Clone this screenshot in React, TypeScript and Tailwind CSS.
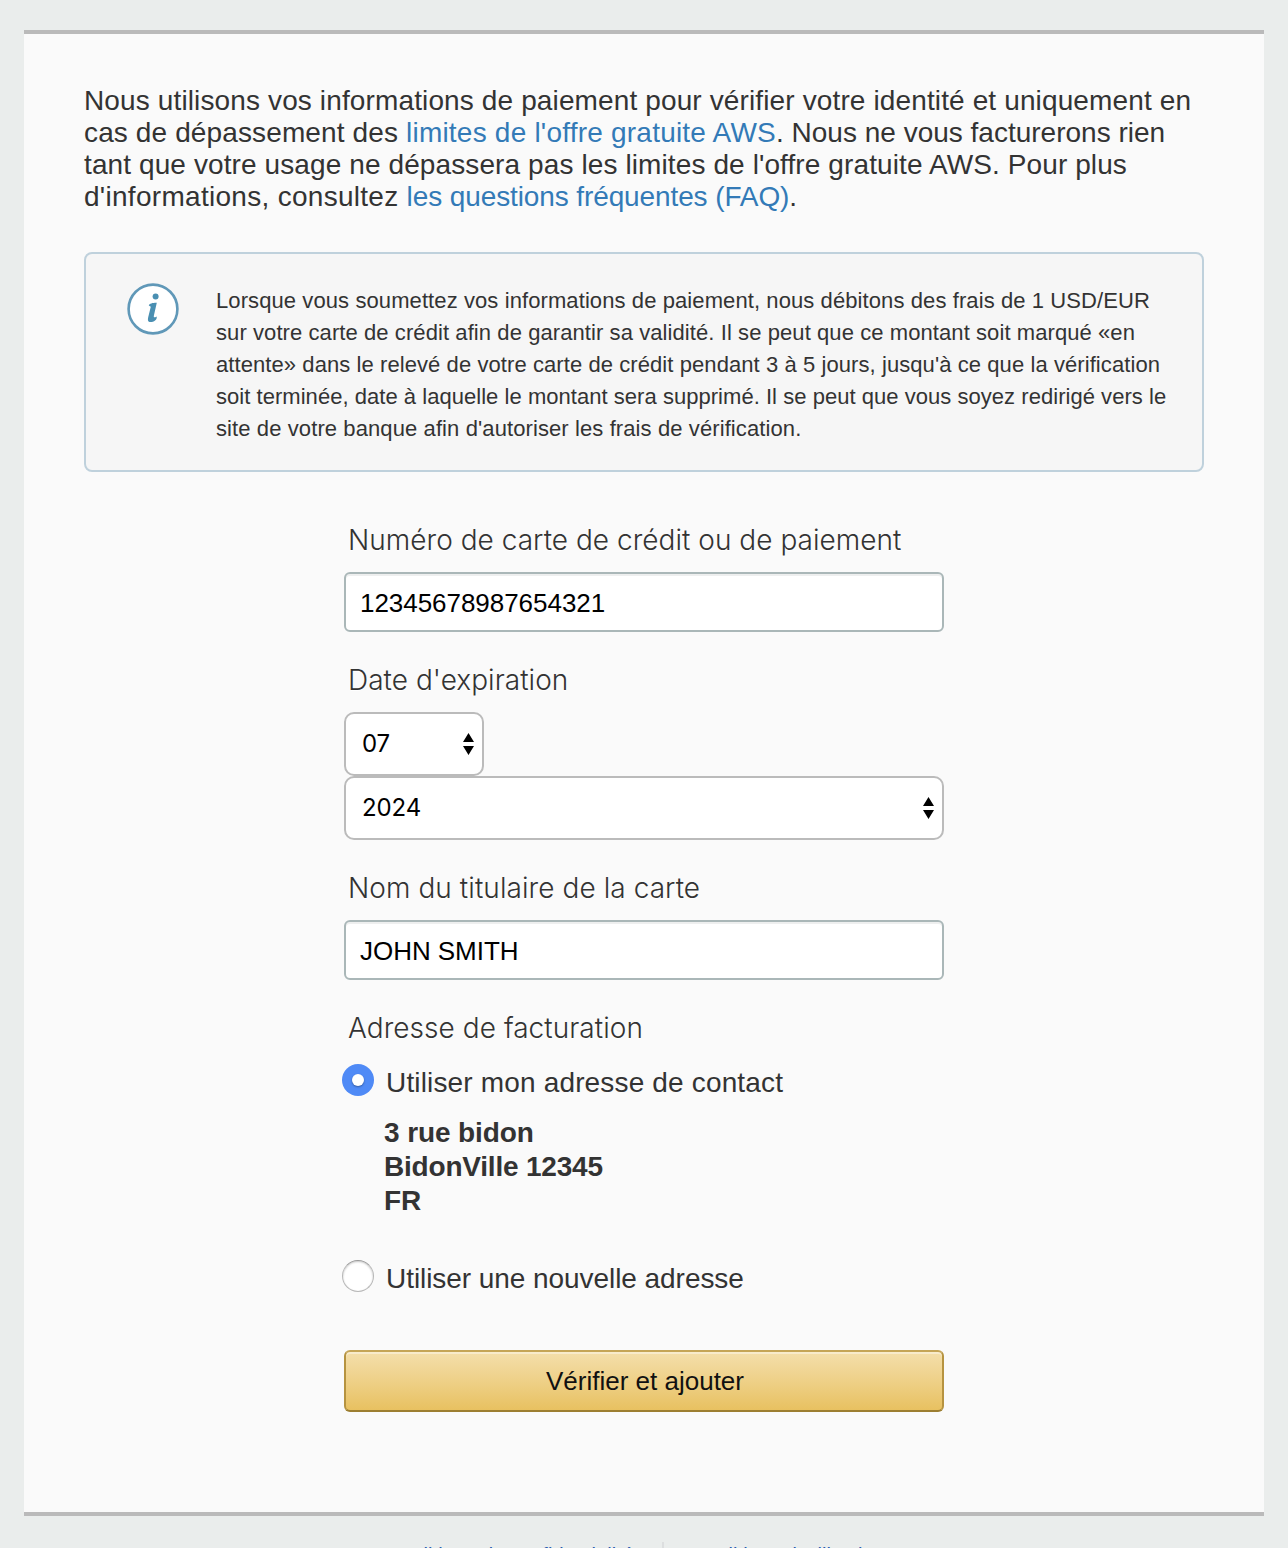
import type { ReactNode } from "react";

function Label({ children, className = "" }: { children: ReactNode; className?: string }) {
  return (
    <div className={`h-8 whitespace-nowrap pl-1 font-['Inter',sans-serif] text-[28px] font-light leading-8 text-[#333] [text-shadow:0_1px_0_#fff] ${className}`}>
      {children}
    </div>
  );
}

function TextField({ value }: { value: string }) {
  return (
    <input
      readOnly
      value={value}
      className="mt-4 block h-[60px] w-full rounded-[6px] border-2 border-[#aab7b8] bg-white px-3.5 pt-0.5 text-[26px] tracking-[-0.04px] text-black shadow-[inset_0_2px_0_#eeefef] outline-none"
    />
  );
}

function Select({ value, className }: { value: string; className: string }) {
  return (
    <div className={`flex h-16 items-center justify-between rounded-[10px] border-2 border-[#bbb] bg-white pl-4 pr-2 ${className}`}>
      <span className="font-['Inter',sans-serif] text-[24px] leading-8 tracking-[-0.1px] text-black">{value}</span>
      <svg width="11" height="22" viewBox="0 0 11 22">
        <path d="M5.5 0 11 9H0zM5.5 22 0 13h11z" fill="#000" />
      </svg>
    </div>
  );
}

function Radio({ checked }: { checked?: boolean }) {
  return checked ? (
    <span className="flex size-8 items-center justify-center rounded-full bg-[#4f8af6]">
      <span className="size-3 rounded-full bg-white shadow-[0_1px_2px_rgba(0,0,0,0.35)]" />
    </span>
  ) : (
    <span className="size-8 rounded-full border border-[#b8b8b8] border-t-[#999] bg-white shadow-[inset_0_1px_2px_rgba(0,0,0,0.22)]" />
  );
}

export default function App() {
  return (
    <div className="h-[1548px] w-[1288px] overflow-hidden bg-[#eaedec] px-6 pt-[30px] font-['Liberation_Sans',Arial,sans-serif] text-[#333]">
      <main className="h-[1486px] border-y-4 border-[#bababa] bg-[#fafafa] px-[60px] pt-[51px]">
        <p className="whitespace-nowrap text-[28px] leading-8">
          <span className="tracking-[0.128px]">Nous utilisons vos informations de paiement pour vérifier votre identité et uniquement en</span>
          <br />
          <span className="tracking-[0.126px]">cas de dépassement des </span>
          <a className="tracking-[0.217px] text-[#337ab7]">limites de l'offre gratuite AWS</a>
          <span>. Nous ne vous facturerons rien</span>
          <br />
          <span className="tracking-[0.105px]">tant que votre usage ne dépassera pas les limites de l'offre gratuite AWS. Pour plus</span>
          <br />
          <span className="tracking-[0.29px]">d'informations, consultez </span>
          <a className="tracking-[-0.11px] text-[#337ab7]">les questions fréquentes (FAQ)</a>.
        </p>

        <section className="mt-[39px] flex h-[220px] rounded-[8px] border-2 border-[#bfd1dc] bg-[#f6f6f6] pl-[41px] pt-[30px]">
          <svg width="52" height="52" viewBox="0 0 52 52" className="mr-[37px] shrink-0 overflow-visible">
            <circle cx="26" cy="25" r="24.4" fill="#fff" stroke="#6098b8" strokeWidth="2.6" />
            <circle cx="28.6" cy="12.6" r="3" fill="#4a8fb2" />
            <path
              d="M21.8 21.4C22.3 19.6 26 18.7 29.8 18.8L26.9 31.4C26.5 33.6 27.3 34 29.6 32.4C30.6 35.6 26.6 38 23.6 38C20.8 38 20.6 35.9 21.2 33.2L23.8 22.8Z"
              fill="#4a8fb2"
            />
          </svg>
          <p className="whitespace-nowrap pt-px text-[22px] leading-8">
            <span className="tracking-[0.093px]">Lorsque vous soumettez vos informations de paiement, nous débitons des frais de 1 USD/EUR</span>
            <br />
            <span className="tracking-[0.082px]">sur votre carte de crédit afin de garantir sa validité. Il se peut que ce montant soit marqué «en</span>
            <br />
            <span className="tracking-[0.079px]">attente» dans le relevé de votre carte de crédit pendant 3 à 5 jours, jusqu'à ce que la vérification</span>
            <br />
            <span className="tracking-[0.037px]">soit terminée, date à laquelle le montant sera supprimé. Il se peut que vous soyez redirigé vers le</span>
            <br />
            <span className="tracking-[0.1px]">site de votre banque afin d'autoriser les frais de vérification.</span>
          </p>
        </section>

        <form className="mx-auto mt-[52px] w-[600px]">
          <Label className="tracking-[0.03px]">Numéro de carte de crédit ou de paiement</Label>
          <TextField value="12345678987654321" />

          <Label className="mt-8 tracking-[0.03px]">Date d'expiration</Label>
          <Select value="07" className="mt-4 w-[140px]" />
          <Select value="2024" className="w-full" />

          <Label className="mt-8 tracking-[0.07px]">Nom du titulaire de la carte</Label>
          <TextField value="JOHN SMITH" />

          <Label className="mt-8 tracking-[0.05px]">Adresse de facturation</Label>
          <label className="-ml-0.5 mt-5 flex h-8 gap-3 whitespace-nowrap text-[28px]">
            <Radio checked />
            <span className="pt-[3px] leading-8 tracking-[0.16px]">Utiliser mon adresse de contact</span>
          </label>
          <address className="ml-10 mt-5 whitespace-nowrap text-[28px] font-bold not-italic leading-[34px] tracking-[-0.2px]">
            <span className="tracking-[-0.1px]">3 rue bidon</span>
            <br />
            BidonVille 12345
            <br />
            FR
          </address>
          <label className="-ml-0.5 mt-[42px] flex h-8 gap-3 whitespace-nowrap text-[28px]">
            <Radio />
            <span className="pt-[3px] leading-8 tracking-[-0.06px]">Utiliser une nouvelle adresse</span>
          </label>
          <button
            type="button"
            className="mt-[58px] block h-[62px] w-full rounded-[6px] border-2 border-b-[#9c7e31] border-l-[#b69340] border-r-[#b69340] border-t-[#c5a557] bg-linear-to-b from-[#f4dfab] to-[#e8c160] pl-[2px] text-[26px] text-[#111] shadow-[inset_0_2px_0_rgba(255,255,255,0.4)]"
          >
            Vérifier et ajouter
          </button>
        </form>
      </main>
      <footer className="mt-[26px] flex whitespace-nowrap pl-[375px] text-[20px] leading-6 tracking-[0.06px] text-[#2a5db0]">
        <a className="w-[263px] pt-px">Politique de confidentialité</a>
        <span className="mr-[21px] h-6 w-0.5 bg-[#dcdedf]" />
        <a className="pt-px">Conditions d'utilisation</a>
      </footer>
    </div>
  );
}
